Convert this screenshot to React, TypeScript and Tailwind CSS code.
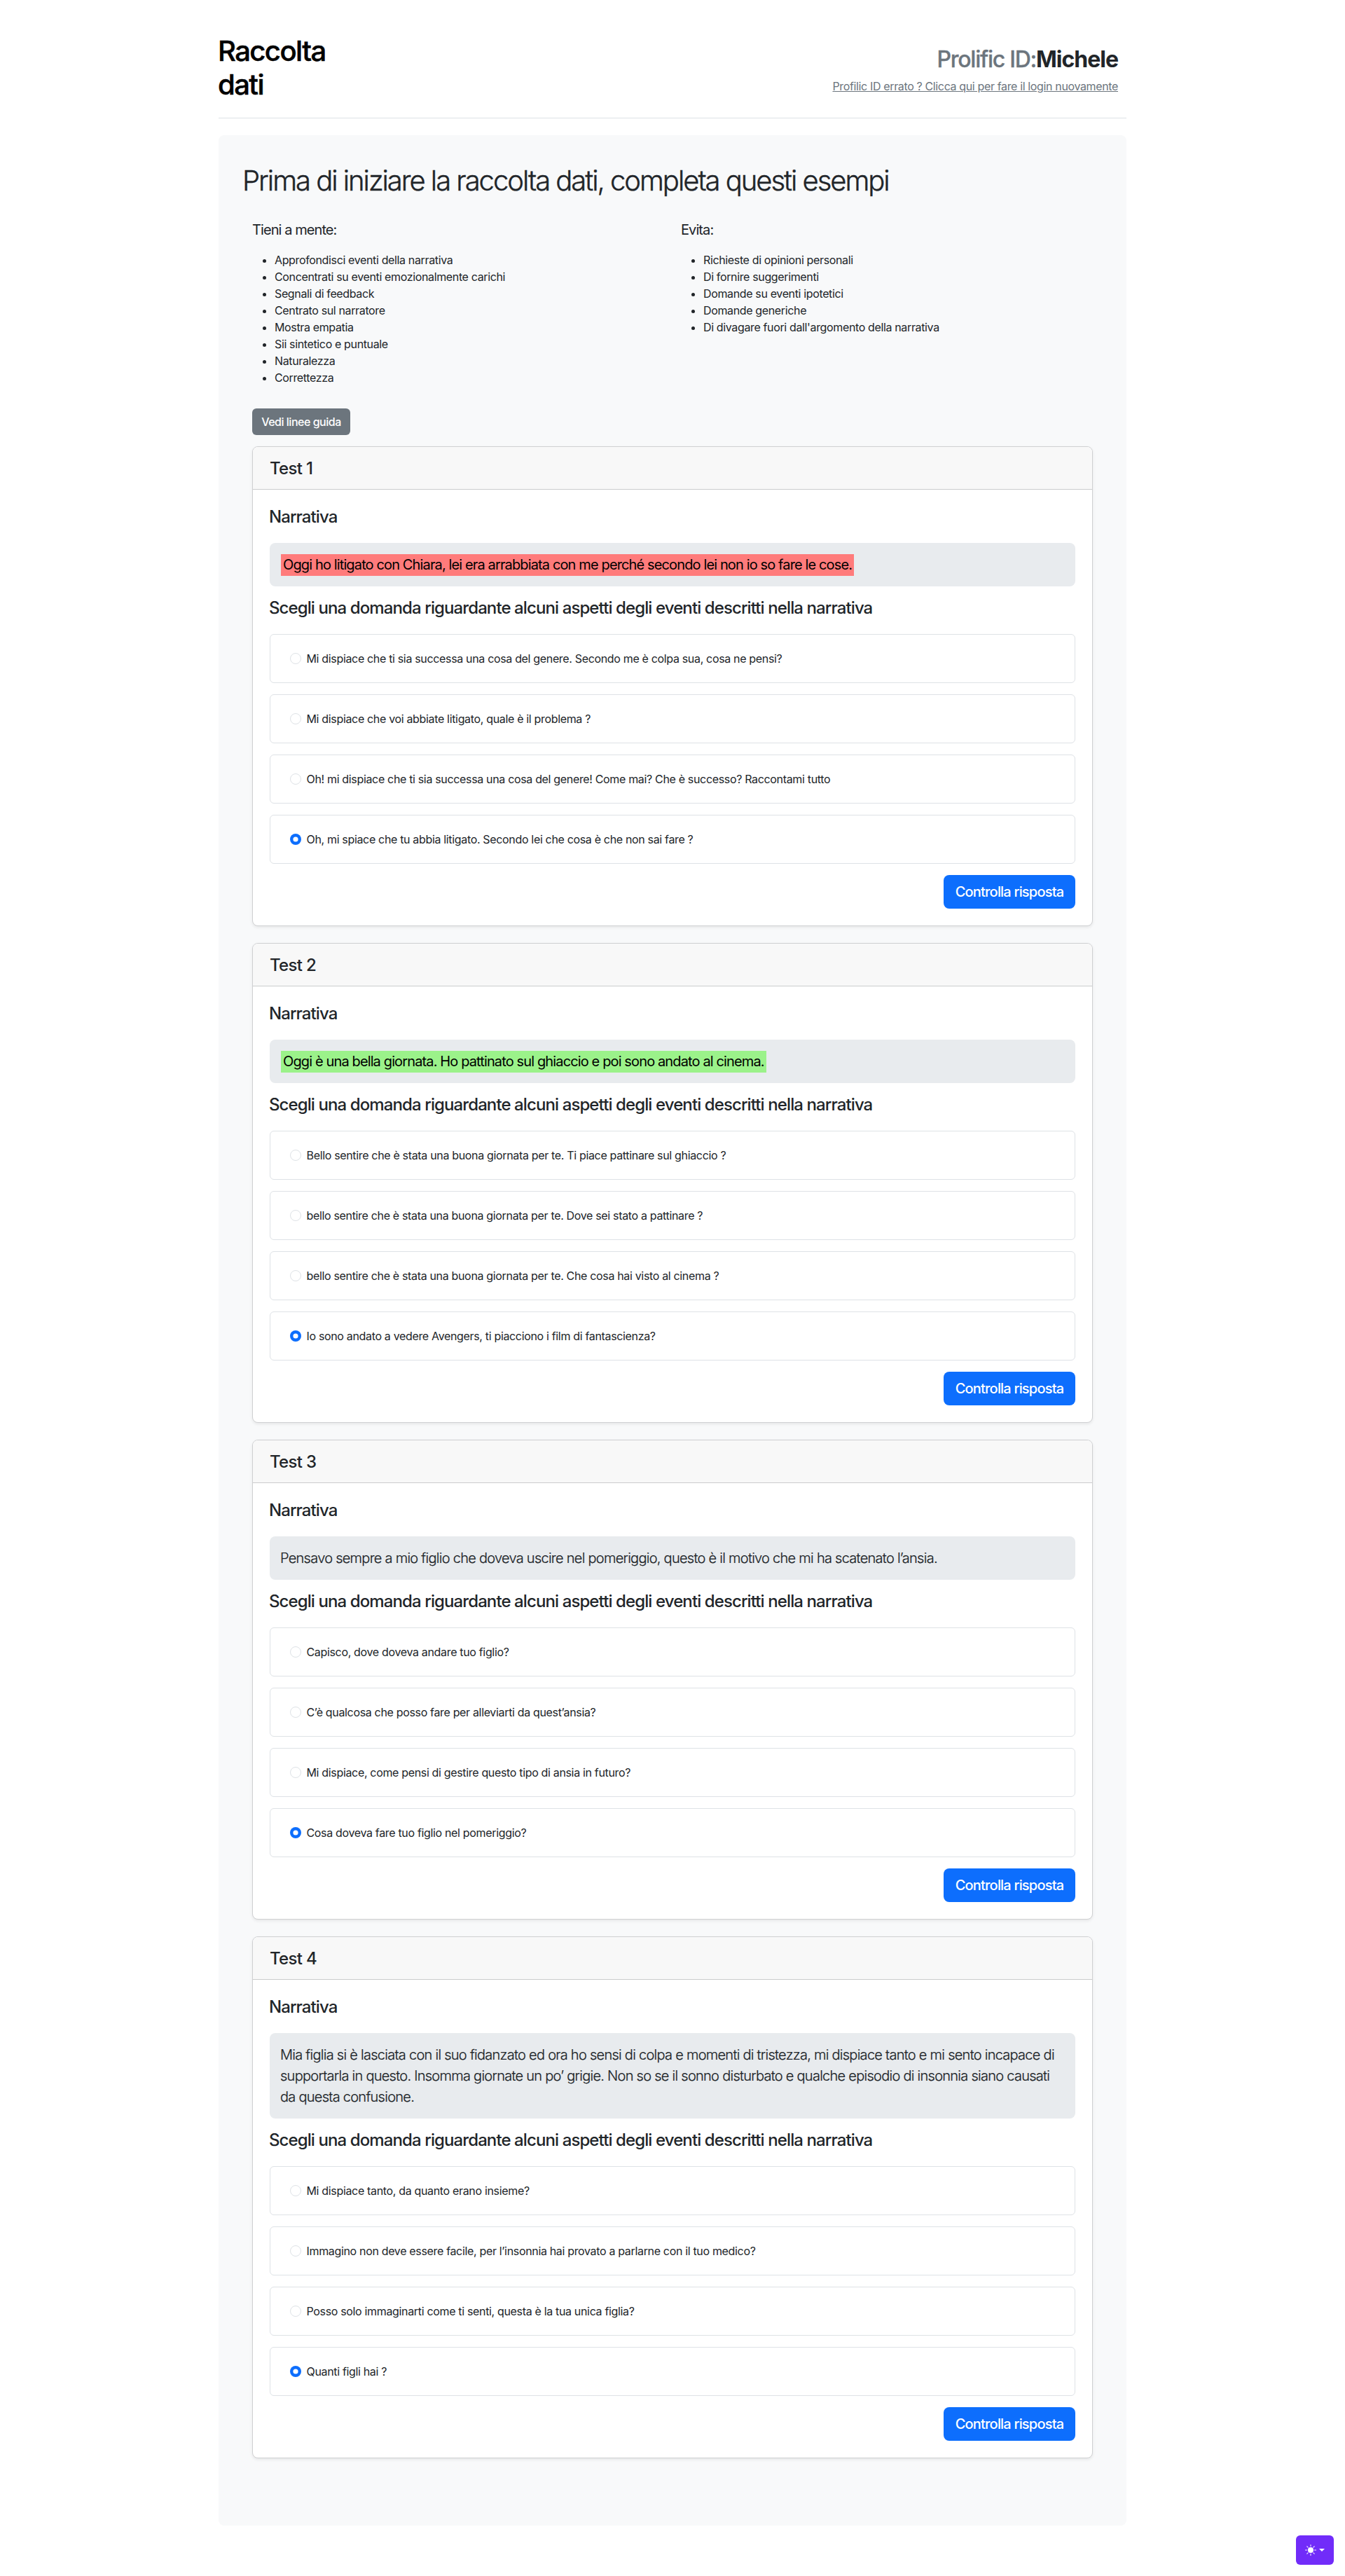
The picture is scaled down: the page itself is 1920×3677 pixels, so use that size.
import { BsSunFill } from "react-icons/bs";

type Test = {
  narrative: string;
  mark?: string;
  options: string[];
};

const KEEP_IN_MIND = [
  "Approfondisci eventi della narrativa",
  "Concentrati su eventi emozionalmente carichi",
  "Segnali di feedback",
  "Centrato sul narratore",
  "Mostra empatia",
  "Sii sintetico e puntuale",
  "Naturalezza",
  "Correttezza",
];

const AVOID = [
  "Richieste di opinioni personali",
  "Di fornire suggerimenti",
  "Domande su eventi ipotetici",
  "Domande generiche",
  "Di divagare fuori dall'argomento della narrativa",
];

const TESTS: Test[] = [
  {
    narrative:
      "Oggi ho litigato con Chiara, lei era arrabbiata con me perché secondo lei non io so fare le cose.",
    mark: "bg-[#ff7b7b]",
    options: [
      "Mi dispiace che ti sia successa una cosa del genere. Secondo me è colpa sua, cosa ne pensi?",
      "Mi dispiace che voi abbiate litigato, quale è il problema ?",
      "Oh! mi dispiace che ti sia successa una cosa del genere! Come mai? Che è successo? Raccontami tutto",
      "Oh, mi spiace che tu abbia litigato. Secondo lei che cosa è che non sai fare ?",
    ],
  },
  {
    narrative:
      "Oggi è una bella giornata. Ho pattinato sul ghiaccio e poi sono andato al cinema.",
    mark: "bg-[#9bf28a]",
    options: [
      "Bello sentire che è stata una buona giornata per te. Ti piace pattinare sul ghiaccio ?",
      "bello sentire che è stata una buona giornata per te. Dove sei stato a pattinare ?",
      "bello sentire che è stata una buona giornata per te. Che cosa hai visto al cinema ?",
      "Io sono andato a vedere Avengers, ti piacciono i film di fantascienza?",
    ],
  },
  {
    narrative:
      "Pensavo sempre a mio figlio che doveva uscire nel pomeriggio, questo è il motivo che mi ha scatenato l’ansia.",
    options: [
      "Capisco, dove doveva andare tuo figlio?",
      "C’è qualcosa che posso fare per alleviarti da quest’ansia?",
      "Mi dispiace, come pensi di gestire questo tipo di ansia in futuro?",
      "Cosa doveva fare tuo figlio nel pomeriggio?",
    ],
  },
  {
    narrative:
      "Mia figlia si è lasciata con il suo fidanzato ed ora ho sensi di colpa e momenti di tristezza, mi dispiace tanto e mi sento incapace di supportarla in questo. Insomma giornate un po’ grigie. Non so se il sonno disturbato e qualche episodio di insonnia siano causati da questa confusione.",
    options: [
      "Mi dispiace tanto, da quanto erano insieme?",
      "Immagino non deve essere facile, per l’insonnia hai provato a parlarne con il tuo medico?",
      "Posso solo immaginarti come ti senti, questa è la tua unica figlia?",
      "Quanti figli hai ?",
    ],
  },
];

function Tips({ title, items }: { title: string; items: string[] }) {
  return (
    <div>
      <p className="mb-4 text-[20px]/[30px] tracking-[-0.92px]">{title}</p>
      <ul className="list-disc pl-8 text-[16px]/[24px] tracking-[-0.36px]">
        {items.map((item) => (
          <li key={item}>{item}</li>
        ))}
      </ul>
    </div>
  );
}

function Option({ text, checked }: { text: string; checked: boolean }) {
  return (
    <label className="flex h-[70px] items-center rounded-md border border-[#dee2e6] pl-7">
      {checked ? (
        <svg className="size-4" viewBox="0 0 16 16">
          <circle cx="8" cy="8" r="8" fill="#0d6efd" />
          <circle cx="8" cy="8" r="3.6" fill="#fff" />
        </svg>
      ) : (
        <span className="size-4 rounded-full border border-[#dee2e6] bg-white" />
      )}
      <span className="ml-[7.5px] text-[16px]/[24px] tracking-[-0.335px]">{text}</span>
    </label>
  );
}

function TestCard({ test, index }: { test: Test; index: number }) {
  return (
    <section className="rounded-lg border border-[#cfd0d2] bg-white shadow-[0_2px_4px_rgba(0,0,0,0.075)]">
      <h2 className="flex h-[61px] items-center rounded-t-[7px] border-b border-[#cbcccd] bg-[#f8f8f8] pl-6 text-[24px]/[29px] font-medium tracking-[-0.68px]">
        Test {index + 1}
      </h2>
      <div className="p-6">
        <h3 className="-ml-px text-[24px]/[29px] font-medium tracking-[-0.92px]">Narrativa</h3>
        <div className="mt-[23px] rounded-lg bg-[#e8ebee] p-4 text-[20px]/[30px]">
          {test.mark ? (
            <p className="tracking-[-0.87px] text-black">
              <mark className={`${test.mark} -my-px inline-block h-[31px] px-[3px] text-black`}>
                {test.narrative}
              </mark>
            </p>
          ) : (
            <p className="-ml-px font-light tracking-[-0.73px] [-webkit-text-stroke:0.2px_#212529]">
              {test.narrative}
            </p>
          )}
        </div>
        <h3 className="mt-4 mb-[23px] -ml-px text-[24px]/[29px] font-medium tracking-[-0.9px]">
          Scegli una domanda riguardante alcuni aspetti degli eventi descritti nella narrativa
        </h3>
        <div className="flex flex-col gap-4">
          {test.options.map((option, i) => (
            <Option key={option} text={option} checked={i === test.options.length - 1} />
          ))}
        </div>
        <div className="mt-4 flex justify-end">
          <button className="flex h-12 w-[188px] items-center justify-center rounded-lg bg-[#0d6efd] text-[20px]/[30px] font-medium tracking-[-0.8px] text-white">
            Controlla risposta
          </button>
        </div>
      </div>
    </section>
  );
}

export default function App() {
  return (
    <div className="min-h-[3677px] bg-white font-['Inter',sans-serif] text-[#212529]">
      <div className="mx-auto w-[1296px] pt-12">
        <header className="flex h-[121px] justify-between border-b border-[#dee2e6] pr-3">
          <h1 className="-ml-px w-[160px] pt-px text-[40px]/[48px] font-medium tracking-[-1.55px] text-black [-webkit-text-stroke:0.5px_#000]">
            Raccolta dati
          </h1>
          <div className="pt-[18px] text-right">
            <p className="text-[32px]/[38px] font-medium tracking-[-1.26px] text-[#6c757d] [-webkit-text-stroke:0.3px_#6c757d]">
              Prolific ID:
              <span className="font-bold tracking-[-1px] text-[#212529] [-webkit-text-stroke:0]">Michele</span>
            </p>
            <a className="mt-[7px] block text-[16px]/[24px] tracking-[-0.36px] text-[#6c757d] underline">
              Profilic ID errato ? Clicca qui per fare il login nuovamente
            </a>
          </div>
        </header>

        <main className="mt-6 rounded-lg bg-[#f8f9fa] px-12 pt-[41px] pb-24">
          <h1 className="-ml-[14px] text-[40px]/[48px] font-light tracking-[-2.03px] [-webkit-text-stroke:0.4px_#212529]">
            Prima di iniziare la raccolta dati, completa questi esempi
          </h1>
          <div className="mt-[31px] grid grid-cols-2 gap-6">
            <Tips title="Tieni a mente:" items={KEEP_IN_MIND} />
            <Tips title="Evita:" items={AVOID} />
          </div>
          <button className="mt-8 flex h-[38px] w-[140px] items-center justify-center rounded-md bg-[#6c757d] text-[16px]/[24px] font-medium tracking-[-0.48px] text-white">
            Vedi linee guida
          </button>
          <div className="mt-4 flex flex-col gap-6">
            {TESTS.map((test, i) => (
              <TestCard key={test.narrative} test={test} index={i} />
            ))}
          </div>
        </main>
      </div>

      <button
        aria-label="Toggle theme"
        className="fixed right-4 bottom-4 flex h-[42px] w-[54px] items-center rounded-md bg-[#712cf9] pl-[13px] text-white"
      >
        <BsSunFill className="size-4" />
        <span className="ml-1 border-x-[4.8px] border-t-[4.8px] border-x-transparent border-t-white" />
      </button>
    </div>
  );
}
